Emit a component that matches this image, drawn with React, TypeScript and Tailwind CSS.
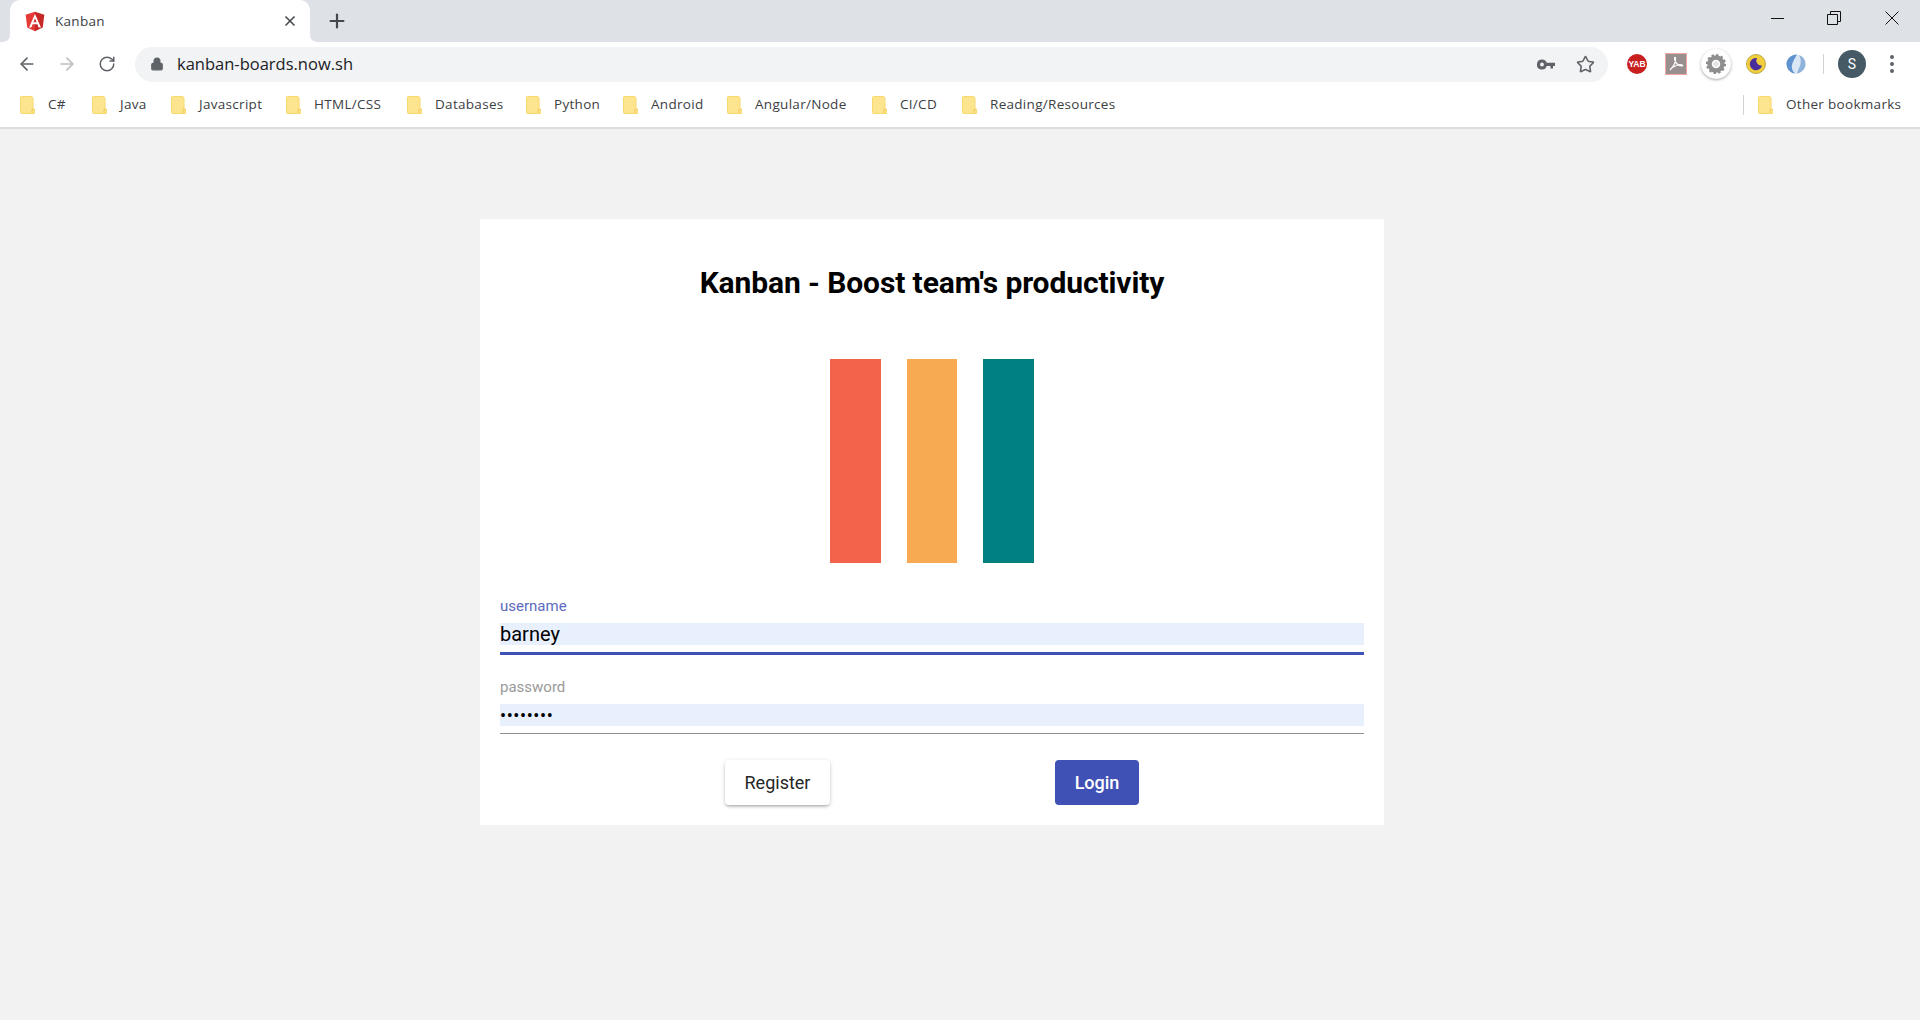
import { ArrowLeft, ArrowRight, RotateCw, Lock, Star, X, Plus } from "lucide-react";

const bookmarks = [
  { label: "C#", width: "w-[18px]", gap: "mr-[26px]" },
  { label: "Java", width: "w-[28px]", gap: "mr-[23px]" },
  { label: "Javascript", width: "w-[63px]", gap: "mr-[24px]" },
  { label: "HTML/CSS", width: "w-[70px]", gap: "mr-[23px]" },
  { label: "Databases", width: "w-[68px]", gap: "mr-[23px]" },
  { label: "Python", width: "w-[46px]", gap: "mr-[23px]" },
  { label: "Android", width: "w-[53px]", gap: "mr-[23px]" },
  { label: "Angular/Node", width: "w-[95px]", gap: "mr-[22px]" },
  { label: "CI/CD", width: "w-[39px]", gap: "mr-[23px]" },
  { label: "Reading/Resources", width: "w-[127px]", gap: "" },
];

function FolderIcon() {
  return (
    <svg width="15" height="18" viewBox="0 0 15 18" className="shrink-0">
      <path d="M0.5 1.5 Q0.5 0.5 1.5 0.5 H11 Q13 0.5 13 2.5 V13 H14.5 V17.5 H1.5 Q0.5 17.5 0.5 16.5 Z" fill="#fde58f" stroke="#f7d96e" strokeWidth="1" />
      <path d="M12 17 V13.5 H14" fill="none" stroke="#efcb57" strokeWidth="1" />
    </svg>
  );
}

function Bookmark({ label, width, gap }: { label: string; width: string; gap: string }) {
  return (
    <div className={`flex items-center gap-[13px] ${gap}`}>
      <FolderIcon />
      <span className={`${width} whitespace-nowrap text-[13.5px] tracking-[0.3px] text-[#3c4043]`}>{label}</span>
    </div>
  );
}

function AngularLogo() {
  return (
    <svg width="20" height="21" viewBox="0 0 250 250">
      <polygon points="125,2 8,42 28,200 125,248" fill="#e53935" />
      <polygon points="125,2 242,42 222,200 125,248" fill="#c62828" />
      <path d="M125 32 L50 200 H80 L95 160 H155 L170 200 H200 Z M145 134 H105 L125 84 Z" fill="#fff" fillRule="evenodd" />
    </svg>
  );
}

function TabFoot({ side }: { side: "left" | "right" }) {
  return (
    <svg
      width="8"
      height="8"
      viewBox="0 0 8 8"
      className={side === "left" ? "absolute bottom-0 left-[-8px]" : "absolute bottom-0 right-[-8px]"}
    >
      <path d={side === "left" ? "M8 0 V8 H0 Q8 8 8 0 Z" : "M0 0 V8 H8 Q0 8 0 0 Z"} fill="#fff" />
    </svg>
  );
}

function KeyIcon() {
  return (
    <svg width="18" height="11" viewBox="0 0 18 11">
      <path
        d="M5 0.5 A5 5 0 0 1 9.7 3.8 H18 V7 H16 V9.5 H13.5 V7 H9.7 A5 5 0 1 1 5 0.5 Z M5 3.6 A1.9 1.9 0 1 0 5 7.4 A1.9 1.9 0 1 0 5 3.6 Z"
        fill="#5f6368"
        fillRule="evenodd"
      />
    </svg>
  );
}

function Extensions() {
  return (
    <div className="flex items-center">
      {/* YAB */}
      <div className="ml-[19px] flex h-[20px] w-[20px] items-center justify-center rounded-full bg-[#c8201f] text-[8.5px] font-bold leading-none text-white font-['Liberation_Sans',sans-serif]">
        YAB
      </div>
      {/* pdf */}
      <svg width="22" height="22" viewBox="0 0 22 22" className="ml-[18px]">
        <rect x="0.5" y="0.5" width="21" height="21" fill="#9a8f8f" stroke="#f0a8a0" />
        <path d="M5 17 C8 14 11 9 10.5 5 C10 3.5 9 5 10 7.5 C11 10.5 14 13 17.5 13 C18.5 12.5 16 11 12.5 12 C9.5 13 6.5 15 5 17 Z" fill="none" stroke="#fff" strokeWidth="1.2" />
      </svg>
      {/* gear */}
      <div className="ml-[14px] flex h-[30px] w-[30px] items-center justify-center rounded-full bg-white shadow-[0_1px_3px_rgba(0,0,0,0.35)]">
        <svg width="20" height="20" viewBox="0 0 20 20">
          <circle cx="10" cy="10" r="6.5" fill="none" stroke="#8f8f8f" strokeWidth="4.5" />
          <circle cx="10" cy="10" r="9" fill="none" stroke="#8a8a8a" strokeWidth="2" strokeDasharray="2.4 2.3" />
          <circle cx="10" cy="10" r="2.8" fill="#e4e4e4" />
        </svg>
      </div>
      {/* moon */}
      <svg width="20" height="20" viewBox="0 0 20 20" className="ml-[15px]">
        <circle cx="10" cy="10" r="9.5" fill="#f0ce3c" />
        <circle cx="10" cy="10" r="9.5" fill="none" stroke="#bfa84a" strokeWidth="1" />
        <path d="M11 4 A6.2 6.2 0 1 0 16 11.5 A5 5 0 0 1 11 4 Z" fill="#4a2f9c" />
      </svg>
      {/* swirl */}
      <svg width="20" height="20" viewBox="0 0 20 20" className="ml-[20px]">
        <circle cx="10" cy="10" r="9.5" fill="#dbe7f4" />
        <path d="M11 0.6 C4 1 0.5 6 0.5 10 C0.5 15 4.5 19.4 9.5 19.5 C5.5 17 5 12 7 8 C8 5.5 10 2.5 11 0.6 Z" fill="#5f93cf" />
        <path d="M11 19.4 C16 18.5 19.5 14.5 19.5 10 C19.5 6 17 2.5 13 1 C15.5 5 15 10 13.5 13 C12.5 15.5 11.5 17.5 11 19.4 Z" fill="#8fb2da" />
      </svg>
      <div className="ml-[17px] h-[20px] w-px bg-[#d0d2d5]" />
      <div className="ml-[14px] flex h-[28px] w-[28px] items-center justify-center rounded-full bg-[#455a64] text-[14px] text-white font-['Roboto',sans-serif]">
        S
      </div>
      <div className="ml-[24px] flex flex-col gap-[3px]">
        <span className="h-[4px] w-[4px] rounded-full bg-[#5f6368]" />
        <span className="h-[4px] w-[4px] rounded-full bg-[#5f6368]" />
        <span className="h-[4px] w-[4px] rounded-full bg-[#5f6368]" />
      </div>
    </div>
  );
}

function BrowserChrome() {
  return (
    <div className="shrink-0 font-['Open_Sans',sans-serif]">
      {/* tab strip */}
      <div className="flex h-[42px] items-end bg-[#dee1e6] pl-[10px]">
        <div className="relative flex h-[42px] w-[300px] items-center rounded-t-[10px] bg-white pl-[15px] pr-[12px]">
          <TabFoot side="left" />
          <AngularLogo />
          <span className="ml-[10px] flex-1 text-[13.5px] tracking-[0.3px] text-[#3c4043]">Kanban</span>
          <X size={16} strokeWidth={2.5} className="text-[#45484c]" />
          <TabFoot side="right" />
        </div>
        <Plus size={22} strokeWidth={2.4} className="mb-[10px] ml-[16px] text-[#45484c]" />
        <div className="flex-1" />
        <div className="mb-[17px] flex items-center">
          <svg width="13" height="14" viewBox="0 0 13 14">
            <path d="M0 7.5 H13" fill="none" stroke="#111" strokeWidth="1" />
          </svg>
          <svg width="14" height="14" viewBox="0 0 14 14" className="ml-[43px]">
            <path d="M0.5 3.5 H10.5 V13.5 H0.5 Z M3.5 3.5 V0.5 H13.5 V10.5 H10.5" fill="none" stroke="#111" strokeWidth="1" />
          </svg>
          <svg width="14" height="14" viewBox="0 0 14 14" className="ml-[44px] mr-[21px]">
            <path d="M0.5 0.5 L13.5 13.5 M13.5 0.5 L0.5 13.5" fill="none" stroke="#111" strokeWidth="1" />
          </svg>
        </div>
      </div>
      {/* toolbar */}
      <div className="flex h-[42px] items-center bg-white pl-[17px] pr-[22px] pt-[2px]">
        <ArrowLeft size={20} strokeWidth={2} className="text-[#5f6368]" />
        <ArrowRight size={20} strokeWidth={2} className="ml-[20px] text-[#bcbec1]" />
        <RotateCw size={18} strokeWidth={2} className="ml-[21px] text-[#5f6368]" />
        <div className="ml-[19px] flex h-[35px] w-[1473px] items-center rounded-full bg-[#f1f3f4] pl-[15px] pr-[10px]">
          <Lock size={14} fill="#5f6368" className="text-[#5f6368]" />
          <span className="ml-[13px] flex-1 text-[16.5px] text-[#202124]">kanban-boards.now.sh</span>
          <KeyIcon />
          <Star size={19} strokeWidth={2} className="ml-[21px] mr-[3px] text-[#5f6368]" />
        </div>
        <Extensions />
      </div>
      {/* bookmarks */}
      <div className="flex h-[45px] items-center border-b-2 border-[#dcdde0] bg-white pb-[2px] pl-[20px] pr-[19px]">
        {bookmarks.map((b) => (
          <Bookmark key={b.label} {...b} />
        ))}
        <div className="flex-1" />
        <div className="mr-[14px] h-[20px] w-px bg-[#d0d2d5]" />
        <Bookmark label="Other bookmarks" width="w-[115px]" gap="" />
      </div>
    </div>
  );
}

function Field({ label, value, active, password }: { label: string; value: string; active?: boolean; password?: boolean }) {
  return (
    <div>
      <div className={`h-[18px] text-[15px] leading-[18px] ${active ? "text-[#5c6bc0]" : "text-[#9a9a9a]"}`}>{label}</div>
      <div className={`mt-[8px] flex h-[22px] items-center bg-[#e8f0fe] text-black ${password ? "text-[18px] tracking-[0.6px]" : "text-[20px]"}`}>
        {value}
      </div>
      {active ? (
        <div className="mt-[7px] h-[3px] bg-[#3f51b5]" />
      ) : (
        <div className="mt-[7px] h-px bg-[#8f8f8f]" />
      )}
    </div>
  );
}

function LoginCard() {
  return (
    <div className="ml-[480px] mt-[90px] h-[606px] w-[904px] bg-white px-[20px] font-['Roboto',sans-serif]">
      <h1 className="pt-[44px] text-center text-[30px] font-bold leading-[40px] tracking-[-0.1px] text-black">
        Kanban - Boost team's productivity
      </h1>
      <div className="mt-[56px] flex justify-center gap-[26px]">
        <div className="h-[204px] w-[51px] bg-[#f3634b]" />
        <div className="h-[204px] w-[50px] bg-[#f7aa52]" />
        <div className="h-[204px] w-[51px] bg-[#008080]" />
      </div>
      <div className="mt-[34px]">
        <Field label="username" value="barney" active />
      </div>
      <div className="mt-[23px]">
        <Field label="password" value="••••••••" password />
      </div>
      <div className="mt-[26px] flex">
        <button className="ml-[225px] h-[45px] w-[105px] rounded-[4px] bg-white text-[18px] text-[#262626] shadow-[0_2px_3px_-1px_rgba(0,0,0,0.3),0_1px_5px_rgba(0,0,0,0.14)]">
          Register
        </button>
        <button className="ml-[225px] h-[45px] w-[84px] rounded-[4px] bg-[#3f51b5] text-[18px] font-medium text-white">
          Login
        </button>
      </div>
    </div>
  );
}

export default function App() {
  return (
    <div className="flex h-[1020px] w-[1920px] flex-col overflow-hidden bg-[#f2f2f2]">
      <BrowserChrome />
      <LoginCard />
    </div>
  );
}
